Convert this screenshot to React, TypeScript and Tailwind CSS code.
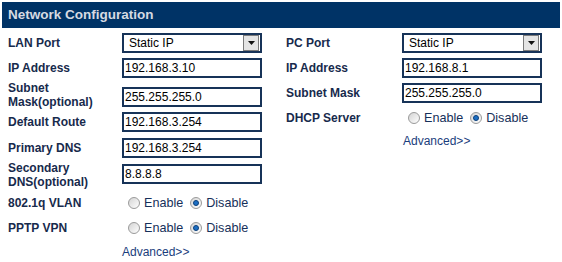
import React from 'react';

/* ---------- Small widgets ---------- */
const Label: React.FC<{ children: React.ReactNode; w: string }> = ({ children, w }) => (
  <div className={`${w} shrink-0 text-[12px] leading-[14px] font-bold text-[#172a4c]`}>{children}</div>
);

const TextBox: React.FC<{ value: string; className?: string }> = ({ value, className = '' }) => (
  <div
    className={`w-[140px] h-[20px] shrink-0 border-2 border-[#173358] bg-white flex items-center pl-[1px] text-[12px] text-black ${className}`}
  >
    {value}
  </div>
);

const Select: React.FC<{ value: string }> = ({ value }) => (
  <div className="w-[140px] h-[20px] shrink-0 border-2 border-[#173358] bg-white flex items-center">
    <span className="flex-1 pl-[5px] text-[12px] text-black">{value}</span>
    <span className="w-[16px] h-[16px] mr-[1px] bg-[#e4e4e4] border border-[#7a7a7a] flex items-center justify-center">
      <svg width="7" height="4" viewBox="0 0 7 4">
        <path d="M0 0h7L3.5 4z" fill="#111" />
      </svg>
    </span>
  </div>
);

const Radio: React.FC<{ checked?: boolean }> = ({ checked }) => (
  <span className="w-[12px] h-[12px] rounded-full border border-[#9a9a9a] bg-gradient-to-br from-[#d4d4d4] to-[#ffffff] flex items-center justify-center">
    {checked && <span className="w-[6px] h-[6px] rounded-full bg-[#1d6fc4] border border-[#0b3f7a]" />}
  </span>
);

const EnableDisable: React.FC = () => (
  <div className="flex items-center text-[12.6px] text-[#16305a] pl-[6px]">
    <Radio />
    <span className="ml-[4px]">Enable</span>
    <span className="ml-[7px]"><Radio checked /></span>
    <span className="ml-[4px]">Disable</span>
  </div>
);

/* ---------- Page ---------- */
export default function App() {
  return (
    <div className="w-[562px] h-[262px] bg-white overflow-hidden" style={{ fontFamily: '"Liberation Sans", Arial, sans-serif' }}>
      {/* Title bar */}
      <div className="mt-[2px] mx-[2px] h-[26px] bg-[#003366] flex items-center pl-[6px] text-[13.5px] font-bold text-[#d6dae2]">
        Network Configuration
      </div>

      <div className="flex">
        {/* LAN side */}
        <div className="w-[278px] pl-[8px] flex flex-col">
          <div className="mt-[5px] h-[20px] flex items-center">
            <Label w="w-[114px]">LAN Port</Label>
            <Select value="Static IP" />
          </div>
          <div className="mt-[5px] h-[20px] flex items-center">
            <Label w="w-[114px]">IP Address</Label>
            <TextBox value="192.168.3.10" />
          </div>
          <div className="mt-[3px] h-[28px] flex items-start">
            <Label w="w-[114px]">Subnet<br />Mask(optional)</Label>
            <TextBox value="255.255.255.0" className="mt-[6px]" />
          </div>
          <div className="mt-[3px] h-[20px] flex items-center">
            <Label w="w-[114px]">Default Route</Label>
            <TextBox value="192.168.3.254" />
          </div>
          <div className="mt-[6px] h-[20px] flex items-center">
            <Label w="w-[114px]">Primary DNS</Label>
            <TextBox value="192.168.3.254" />
          </div>
          <div className="mt-[3px] h-[28px] flex items-start">
            <Label w="w-[114px]">Secondary<br />DNS(optional)</Label>
            <TextBox value="8.8.8.8" className="mt-[3px]" />
          </div>
          <div className="mt-[4px] h-[20px] flex items-center">
            <Label w="w-[114px]">802.1q VLAN</Label>
            <EnableDisable />
          </div>
          <div className="mt-[5px] h-[20px] flex items-center">
            <Label w="w-[114px]">PPTP VPN</Label>
            <EnableDisable />
          </div>
          <div className="mt-[4px] h-[20px] flex items-center pl-[114px] text-[12px] text-[#1a3d7c]">
            Advanced&gt;&gt;
          </div>
        </div>

        {/* PC side */}
        <div className="flex-1 pl-[8px] flex flex-col">
          <div className="mt-[5px] h-[20px] flex items-center">
            <Label w="w-[116px]">PC Port</Label>
            <Select value="Static IP" />
          </div>
          <div className="mt-[5px] h-[20px] flex items-center">
            <Label w="w-[116px]">IP Address</Label>
            <TextBox value="192.168.8.1" />
          </div>
          <div className="mt-[5px] h-[20px] flex items-center">
            <Label w="w-[116px]">Subnet Mask</Label>
            <TextBox value="255.255.255.0" />
          </div>
          <div className="mt-[5px] h-[20px] flex items-center">
            <Label w="w-[116px]">DHCP Server</Label>
            <EnableDisable />
          </div>
          <div className="mt-[3px] h-[20px] flex items-center pl-[117px] text-[12px] text-[#1a3d7c]">
            Advanced&gt;&gt;
          </div>
        </div>
      </div>
    </div>
  );
}
